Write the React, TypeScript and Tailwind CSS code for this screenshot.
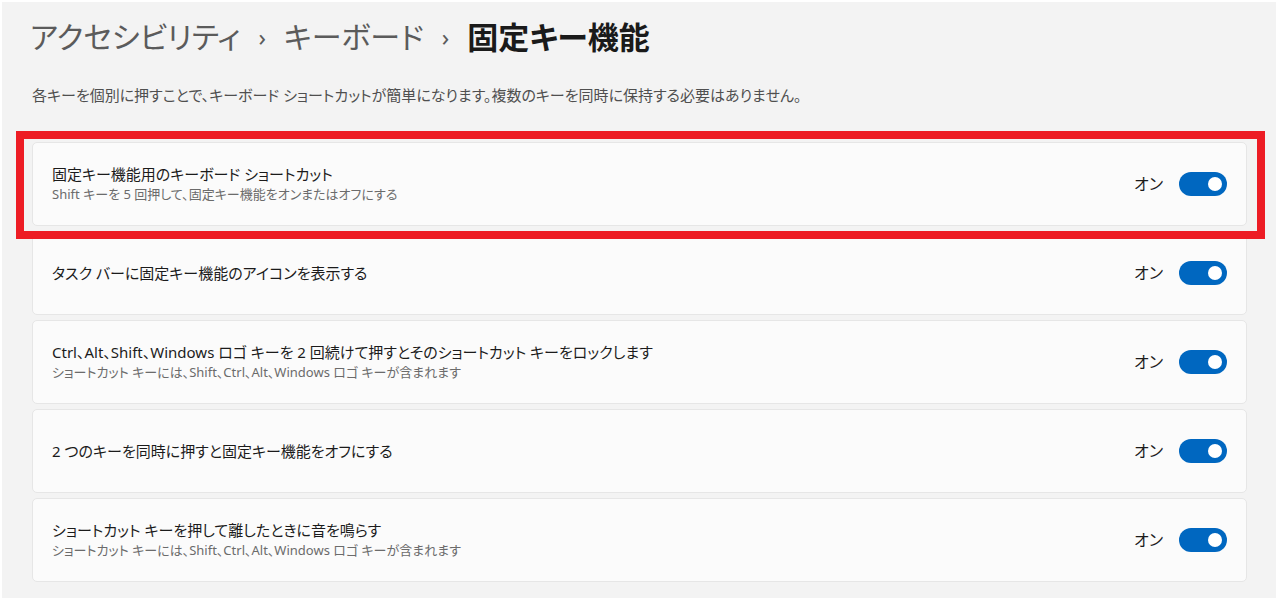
const rows = [
  {
    title: "固定キー機能用のキーボード ショートカット",
    sub: "Shift キーを 5 回押して、固定キー機能をオンまたはオフにする",
  },
  { title: "タスク バーに固定キー機能のアイコンを表示する" },
  {
    title: "Ctrl、Alt、Shift、Windows ロゴ キーを 2 回続けて押すとそのショートカット キーをロックします",
    sub: "ショートカット キーには、Shift、Ctrl、Alt、Windows ロゴ キーが含まれます",
  },
  { title: "2 つのキーを同時に押すと固定キー機能をオフにする" },
  {
    title: "ショートカット キーを押して離したときに音を鳴らす",
    sub: "ショートカット キーには、Shift、Ctrl、Alt、Windows ロゴ キーが含まれます",
  },
];

const Toggle = () => (
  <div className="flex items-center gap-4">
    <span className="text-[16px] text-[#1b1b1b]">オン</span>
    <div className="flex h-6 w-12 items-center justify-end rounded-full bg-[#0067c0] pr-[5px]">
      <div className="h-[14px] w-[14px] rounded-full bg-white" />
    </div>
  </div>
);

export default function App() {
  return (
    <div
      className="relative h-[602px] w-full bg-white pb-1 pl-[2px] pr-1 pt-[2px] [font-feature-settings:'palt']"
      style={{ fontFamily: '"Noto Sans", "Noto Sans CJK JP", sans-serif' }}
    >
      <div className="h-full w-full bg-[#f3f3f3] pl-[28px] pr-[29px] pt-3">
        <h1 className="flex items-center gap-[18px] text-[30px] leading-[46px]">
          <span className="text-[#5b5b5b]">アクセシビリティ</span>
          <span className="text-[24px] text-[#5b5b5b]">›</span>
          <span className="text-[#5b5b5b]">キーボード</span>
          <span className="text-[24px] text-[#5b5b5b]">›</span>
          <span className="text-[31px] font-semibold text-[#1a1a1a]">固定キー機能</span>
        </h1>
        <p className="ml-[2px] mt-[23px] text-[15px] leading-6 text-[#4f4f4f]">
          各キーを個別に押すことで、キーボード ショートカットが簡単になります。複数のキーを同時に保持する必要はありません。
        </p>
        <div className="ml-[2px] mt-[35px] flex flex-col gap-[5px]">
          {rows.map((r, i) => (
            <div
              key={i}
              className="flex h-[84px] items-center justify-between rounded-[5px] border border-[#e6e6e6] bg-[#fbfbfb] pl-[19px] pr-[19px]"
            >
              <div className="flex flex-col">
                <span className="text-[15px] leading-[21px] text-[#1b1b1b]">{r.title}</span>
                {r.sub && (
                  <span className="text-[13px] leading-[19px] text-[#6b6b6b]">{r.sub}</span>
                )}
              </div>
              <Toggle />
            </div>
          ))}
        </div>
      </div>
      <div className="absolute left-4 top-[131px] h-[108px] w-[1249px] border-8 border-[#ed1c24]" />
    </div>
  );
}
